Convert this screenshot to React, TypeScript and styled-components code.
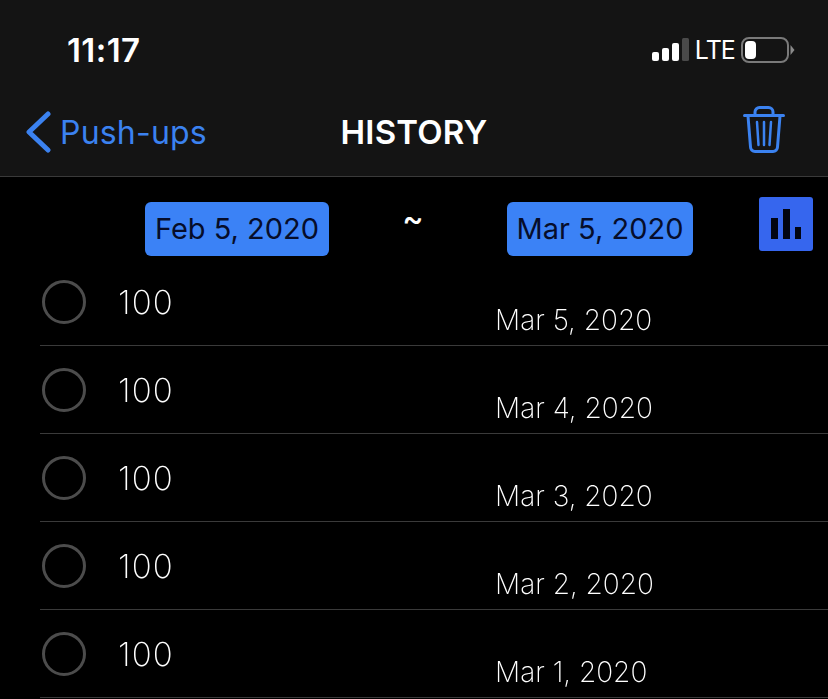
import React from "react";
import styled, { createGlobalStyle } from "styled-components";

const GlobalStyle = createGlobalStyle`
  html, body {
    margin: 0;
    padding: 0;
    background: #000;
    overflow: hidden;
    font-family: Inter, "Liberation Sans", sans-serif;
  }
`;

const Page = styled.div`
  width: 828px;
  height: 699px;
  overflow: hidden;
  background: #000;
`;

const Header = styled.header`
  background: #141414;
  border-bottom: 1px solid #3a3a3a;
  height: 177px;
  box-sizing: border-box;
`;

const StatusBar = styled.div`
  height: 98px;
  display: flex;
  justify-content: space-between;
  align-items: flex-start;
  padding: 30px 33px 0 67px;
  box-sizing: border-box;
`;

const Clock = styled.div`
  color: #fff;
  font-size: 33px;
  line-height: 40px;
  font-weight: 600;
  letter-spacing: 0.4px;
`;

const StatusIcons = styled.div`
  display: flex;
  align-items: center;
  gap: 6px;
  height: 40px;
`;

const Lte = styled.span`
  color: #fff;
  font-size: 25px;
  font-weight: 400;
  letter-spacing: -0.9px;
`;

const NavBar = styled.div`
  height: 78px;
  display: grid;
  grid-template-columns: 1fr auto 1fr;
  align-items: center;
  padding: 0 25px 10px 25px;
  box-sizing: border-box;
`;

const BackLink = styled.a`
  display: flex;
  align-items: center;
  gap: 9px;
  color: #3b82f0;
  font-size: 32px;
  font-weight: 400;
  letter-spacing: 0.2px;
`;

const Title = styled.h1`
  margin: 0;
  color: #fff;
  font-size: 33px;
  font-weight: 600;
  letter-spacing: 0.2px;
`;

const TrashButton = styled.div`
  justify-self: end;
  display: flex;
  margin: 0 18px 5px 0;
`;

const RangeBar = styled.div`
  height: 81px;
  display: flex;
  align-items: flex-start;
  padding-left: 145px;
  box-sizing: border-box;
`;

const DatePill = styled.div<{ $width: number }>`
  width: ${(p) => p.$width}px;
  height: 54px;
  margin-top: 25px;
  border-radius: 6px;
  background: #3b82f6;
  color: #060d2a;
  font-size: 29px;
  line-height: 54px;
  text-align: center;
`;

const Tilde = styled.div`
  width: 168px;
  margin: 20px 10px 0 0;
  color: #fff;
  font-size: 32px;
  line-height: 44px;
  font-weight: 500;
  text-align: center;
`;

const ChartButton = styled.div`
  width: 54px;
  height: 54px;
  margin: 20px 0 0 66px;
  border-radius: 3px;
  background: #3666ee;
  display: flex;
  align-items: center;
  justify-content: center;
`;

const Row = styled.div`
  height: 88px;
  margin-left: 40px;
  box-sizing: border-box;
  border-bottom: 1px solid #3a3a3a;
  display: flex;
  align-items: flex-start;
  padding-left: 2px;
`;

const Radio = styled.div`
  width: 44px;
  height: 44px;
  margin-top: 22px;
  box-sizing: border-box;
  border: 3px solid #4c4c4c;
  border-radius: 50%;
`;

const Count = styled.div`
  width: 377px;
  margin: 24px 0 0 32px;
  color: #fff;
  font-size: 33px;
  line-height: 40px;
  font-weight: 150;
  letter-spacing: 1.1px;
  will-change: transform;
`;

const DateText = styled.div`
  margin-top: 44px;
  color: #fff;
  font-size: 28px;
  line-height: 36px;
  font-weight: 150;
  will-change: transform;
`;

const entries = ["Mar 5, 2020", "Mar 4, 2020", "Mar 3, 2020", "Mar 2, 2020", "Mar 1, 2020"];

function SignalIcon() {
  return (
    <svg width="38" height="26" viewBox="0 0 38 26">
      <rect x="1" y="15" width="7" height="9" rx="2" fill="#fff" />
      <rect x="11" y="11" width="7" height="13" rx="2" fill="#fff" />
      <rect x="21" y="6" width="7" height="18" rx="2" fill="#fff" />
      <rect x="31" y="1" width="7" height="23" rx="1.5" fill="#4a4a4a" />
    </svg>
  );
}

function BatteryIcon() {
  return (
    <svg width="54" height="26" viewBox="0 0 54 26">
      <rect x="1" y="1" width="46" height="24" rx="7" fill="none" stroke="#7a7a7a" strokeWidth="2" />
      <rect x="4" y="4" width="11" height="18" rx="4" fill="#fff" />
      <path d="M49.5 8 L53.5 13 L49.5 18 Z" fill="#8a8a8a" />
    </svg>
  );
}

function TrashIcon() {
  return (
    <svg width="42" height="47" viewBox="0 0 42 47" fill="none" stroke="#3b82f0" strokeLinecap="round" strokeLinejoin="round">
      <path d="M1.5 9.5 H40.5" strokeWidth="3" />
      <path d="M12 8 V6 a4.5 4.5 0 0 1 4.5 -4.5 h9 a4.5 4.5 0 0 1 4.5 4.5 V8" strokeWidth="3" />
      <path d="M5 10 L7.5 41 a4.5 4.5 0 0 0 4.5 4.5 H30 a4.5 4.5 0 0 0 4.5 -4.5 L37 10" strokeWidth="3" />
      <path d="M14 16 L15.5 39 M21 16 V39 M28 16 L26.5 39" strokeWidth="2.5" />
    </svg>
  );
}

export default function App() {
  return (
    <Page>
      <GlobalStyle />
      <Header>
        <StatusBar>
          <Clock>11:17</Clock>
          <StatusIcons>
            <SignalIcon />
            <Lte>LTE</Lte>
            <BatteryIcon />
          </StatusIcons>
        </StatusBar>
        <NavBar>
          <BackLink>
            <svg width="26" height="42" viewBox="0 0 26 42" fill="none" stroke="#3b82f0" strokeWidth="5" strokeLinecap="round" strokeLinejoin="round">
              <path d="M23 3 L4 21 L23 39" />
            </svg>
            Push-ups
          </BackLink>
          <Title>HISTORY</Title>
          <TrashButton>
            <TrashIcon />
          </TrashButton>
        </NavBar>
      </Header>
      <RangeBar>
        <DatePill $width={184}>Feb 5, 2020</DatePill>
        <Tilde>~</Tilde>
        <DatePill $width={186}>Mar 5, 2020</DatePill>
        <ChartButton>
          <svg width="32" height="32" viewBox="0 0 32 32" fill="#020512">
            <rect x="1" y="10" width="7" height="21" />
            <rect x="13" y="1" width="7" height="30" />
            <rect x="25" y="19" width="6" height="12" />
          </svg>
        </ChartButton>
      </RangeBar>
      {entries.map((date) => (
        <Row key={date}>
          <Radio />
          <Count>100</Count>
          <DateText>{date}</DateText>
        </Row>
      ))}
    </Page>
  );
}
